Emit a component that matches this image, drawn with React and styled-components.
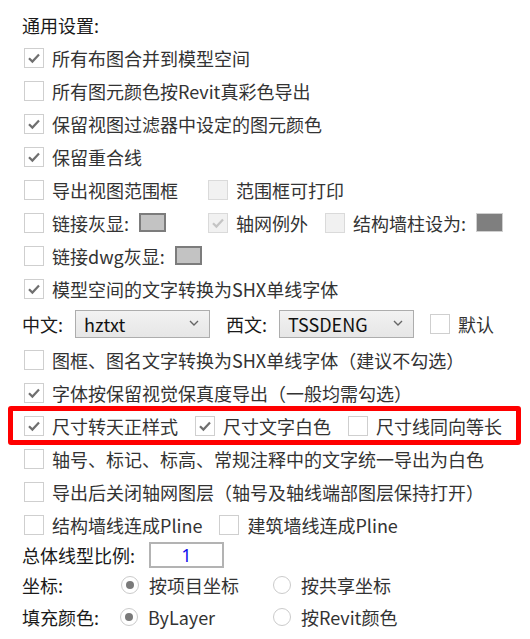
import React from 'react';
import styled, { createGlobalStyle } from 'styled-components';

const GlobalStyle = createGlobalStyle`
    html, body {
        margin: 0;
        padding: 0;
        background: #ffffff;
    }
    body {
        font-family: "Noto Sans CJK SC", "Noto Sans", sans-serif;
        font-size: 18px;
        color: #333;
    }
`;

export default function App() {
  return (
    <>
        <GlobalStyle />
        <Panel>
            <Row $h={33} $top={8}>
                <Caption>通用设置:</Caption>
            </Row>
            <Row><Check checked label="所有布图合并到模型空间" /></Row>
            <Row><Check label="所有图元颜色按Revit真彩色导出" /></Row>
            <Row><Check checked label="保留视图过滤器中设定的图元颜色" /></Row>
            <Row><Check checked label="保留重合线" /></Row>
            <Row>
                <Check label="导出视图范围框" width={184} />
                <Check disabled label="范围框可打印" />
            </Row>
            <Row>
                <Check label="链接灰显:" width={184} swatch="#c3c3c3" />
                <Check checked disabled label="轴网例外" width={117} />
                <Check disabled label="结构墙柱设为:" swatch="#7f7f7f" dark />
            </Row>
            <Row><Check label="链接dwg灰显:" swatch="#c3c3c3" /></Row>
            <Row><Check checked label="模型空间的文字转换为SHX单线字体" /></Row>
            <Row $h={38}>
                <Caption>中文:</Caption>
                <Select $ml={12}>hztxt<Chevron /></Select>
                <Caption $ml={16}>西文:</Caption>
                <Select $ml={12}>TSSDENG<Chevron /></Select>
                <Check label="默认" ml={16} />
            </Row>
            <Row><Check label="图框、图名文字转换为SHX单线字体（建议不勾选）" /></Row>
            <Row><Check checked label="字体按保留视觉保真度导出（一般均需勾选）" /></Row>
            <Highlight>
                <Check checked label="尺寸转天正样式" />
                <Check checked label="尺寸文字白色" ml={17} />
                <Check label="尺寸线同向等长" ml={17} />
            </Highlight>
            <Row><Check label="轴号、标记、标高、常规注释中的文字统一导出为白色" /></Row>
            <Row><Check label="导出后关闭轴网图层（轴号及轴线端部图层保持打开）" /></Row>
            <Row>
                <Check label="结构墙线连成Pline" />
                <Check label="建筑墙线连成Pline" ml={17} />
            </Row>
            <Row $h={28}>
                <Caption $w={127}>总体线型比例:</Caption>
                <NumberBox>1</NumberBox>
            </Row>
            <Row $h={32}>
                <Caption $w={99}>坐标:</Caption>
                <Radio checked label="按项目坐标" width={152} />
                <Radio label="按共享坐标" />
            </Row>
            <Row $h={32}>
                <Caption $w={98}>填充颜色:</Caption>
                <Radio checked label="ByLayer" width={153} />
                <Radio label="按Revit颜色" />
            </Row>
        </Panel>
    </>
  );
}

function Check({ checked, disabled, label, width, swatch, dark, ml }) {
    return (
        <Item $w={width} $ml={ml}>
            <Box $disabled={disabled}>
                {checked && (
                    <svg width="20" height="20" viewBox="0 0 20 20">
                        <path
                            d="M5 10.2 L8.4 13.6 L15 6.6"
                            fill="none"
                            stroke={disabled ? '#c4c4c4' : '#6f6f6f'}
                            strokeWidth="2.2"
                        />
                    </svg>
                )}
            </Box>
            <Text>{label}</Text>
            {swatch && <Swatch $color={swatch} $dark={dark} />}
        </Item>
    );
}

function Radio({ checked, label, width }) {
    return (
        <Item $w={width}>
            <Ring>{checked && <Dot />}</Ring>
            <Text>{label}</Text>
        </Item>
    );
}

function Chevron() {
    return (
        <Arrow width="10" height="6" viewBox="0 0 10 6">
            <path d="M1 1 L5 5 L9 1" fill="none" stroke="#666" strokeWidth="1.4" />
        </Arrow>
    );
}

const Panel = styled.div`
    width: 530px;
    padding-left: 22px;
    box-sizing: border-box;
    display: flex;
    flex-direction: column;
`;

const Row = styled.div`
    display: flex;
    align-items: center;
    height: ${p => p.$h || 33}px;
    margin-top: ${p => p.$top || 0}px;
`;

const Caption = styled.span`
    color: #1a1a1a;
    white-space: nowrap;
    margin-left: ${p => p.$ml || 0}px;
    width: ${p => (p.$w ? `${p.$w}px` : 'auto')};
    flex-shrink: 0;
`;

const Item = styled.label`
    display: flex;
    align-items: center;
    flex-shrink: 0;
    width: ${p => (p.$w ? `${p.$w}px` : 'auto')};
    margin-left: ${p => p.$ml || 0}px;
    &:first-child {
        margin-left: ${p => (p.$ml || 0) + 2}px;
    }
`;

const Box = styled.span`
    width: 20px;
    height: 20px;
    box-sizing: border-box;
    border: 1px solid ${p => (p.$disabled ? '#dadada' : '#cfcfcf')};
    background: ${p => (p.$disabled ? '#f1f1f1' : '#ffffff')};
    display: flex;
    align-items: center;
    justify-content: center;
    flex-shrink: 0;
    margin-right: 8px;
    svg {
        display: block;
        margin: -1px;
    }
`;

const Text = styled.span`
    color: #333;
    white-space: nowrap;
    line-height: 1;
`;

const Swatch = styled.span`
    width: 27px;
    height: 19px;
    box-sizing: border-box;
    margin-left: 10px;
    background: ${p => p.$color};
    border: ${p => (p.$dark ? '1px solid #cfcfcf' : '2px solid #7c7c7c')};
`;

const Select = styled.div`
    width: 135px;
    height: 28px;
    box-sizing: border-box;
    margin-left: ${p => p.$ml || 0}px;
    border: 1px solid #adadad;
    background: linear-gradient(#f2f2f2, #e6e6e6);
    display: flex;
    align-items: center;
    justify-content: space-between;
    padding: 0 10px 0 8px;
    color: #111;
    font-size: 18px;
`;

const Arrow = styled.svg`
    display: block;
    margin-top: -3px;
`;

const Highlight = styled.div`
    display: flex;
    align-items: center;
    height: 39px;
    box-sizing: border-box;
    width: 513px;
    margin: -3px 0 -3px -14px;
    padding-left: 9px;
    border: 5px solid #ff0000;
    border-radius: 3px;
    ${Item}:first-child {
        margin-left: 2px;
    }
`;

const NumberBox = styled.div`
    width: 75px;
    height: 26px;
    box-sizing: border-box;
    border: 2px solid #b3b3b3;
    background: #fff;
    color: #1010ee;
    display: flex;
    align-items: center;
    justify-content: center;
    font-family: "Noto Sans", sans-serif;
`;

const Ring = styled.span`
    width: 18px;
    height: 18px;
    box-sizing: border-box;
    border-radius: 50%;
    border: 1px solid #cbcbcb;
    background: #fff;
    display: flex;
    align-items: center;
    justify-content: center;
    margin-right: 10px;
    flex-shrink: 0;
`;

const Dot = styled.span`
    width: 8px;
    height: 8px;
    border-radius: 50%;
    background: #7a7a7a;
`;
